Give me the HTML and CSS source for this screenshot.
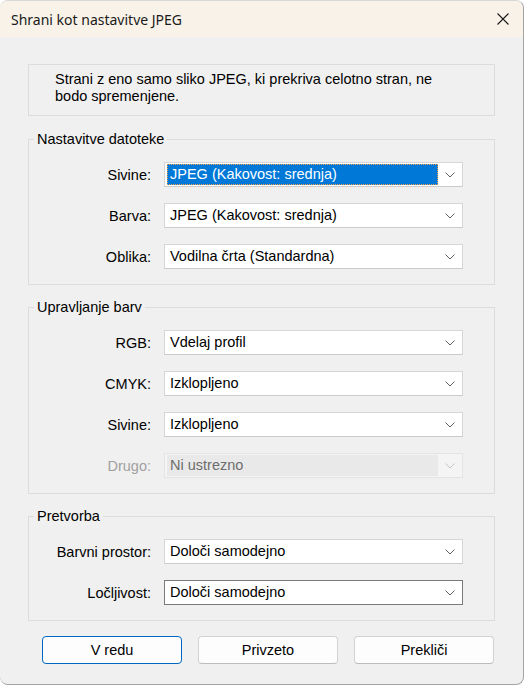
FILE: index.html
```html
<!DOCTYPE html>
<html lang="sl">
<head>
<meta charset="utf-8">
<title>Shrani kot nastavitve JPEG</title>
<link rel="stylesheet" href="styles.css">
</head>
<body>
<div class="window">
  <div class="titlebar">
    <span class="title">Shrani kot nastavitve JPEG</span>
    <span class="close">
      <svg width="12" height="12" viewBox="0 0 12 12"><path d="M0.5 0.5 L11.5 11.5 M11.5 0.5 L0.5 11.5" stroke="#1a1a1a" stroke-width="1.1" fill="none"/></svg>
    </span>
  </div>
  <div class="content">
    <div class="info">Strani z eno samo sliko JPEG, ki prekriva celotno stran, ne bodo spremenjene.</div>

    <fieldset class="group">
      <legend>Nastavitve datoteke</legend>
      <div class="rows">
        <label class="lbl">Sivine:</label>
        <div class="select"><span class="val selected">JPEG (Kakovost: srednja)</span><span class="arrow"><svg width="10" height="6" viewBox="0 0 10 6"><path d="M0.5 0.5 L5 5 L9.5 0.5" stroke="#606060" stroke-width="1" fill="none"/></svg></span></div>
        <label class="lbl">Barva:</label>
        <div class="select"><span class="val">JPEG (Kakovost: srednja)</span><span class="arrow"><svg width="10" height="6" viewBox="0 0 10 6"><path d="M0.5 0.5 L5 5 L9.5 0.5" stroke="#606060" stroke-width="1" fill="none"/></svg></span></div>
        <label class="lbl">Oblika:</label>
        <div class="select"><span class="val">Vodilna črta (Standardna)</span><span class="arrow"><svg width="10" height="6" viewBox="0 0 10 6"><path d="M0.5 0.5 L5 5 L9.5 0.5" stroke="#606060" stroke-width="1" fill="none"/></svg></span></div>
      </div>
    </fieldset>

    <fieldset class="group">
      <legend>Upravljanje barv</legend>
      <div class="rows">
        <label class="lbl">RGB:</label>
        <div class="select"><span class="val">Vdelaj profil</span><span class="arrow"><svg width="10" height="6" viewBox="0 0 10 6"><path d="M0.5 0.5 L5 5 L9.5 0.5" stroke="#606060" stroke-width="1" fill="none"/></svg></span></div>
        <label class="lbl">CMYK:</label>
        <div class="select"><span class="val">Izklopljeno</span><span class="arrow"><svg width="10" height="6" viewBox="0 0 10 6"><path d="M0.5 0.5 L5 5 L9.5 0.5" stroke="#606060" stroke-width="1" fill="none"/></svg></span></div>
        <label class="lbl">Sivine:</label>
        <div class="select"><span class="val">Izklopljeno</span><span class="arrow"><svg width="10" height="6" viewBox="0 0 10 6"><path d="M0.5 0.5 L5 5 L9.5 0.5" stroke="#606060" stroke-width="1" fill="none"/></svg></span></div>
        <label class="lbl disabled">Drugo:</label>
        <div class="select disabled"><span class="val">Ni ustrezno</span><span class="arrow"><svg width="10" height="6" viewBox="0 0 10 6"><path d="M0.5 0.5 L5 5 L9.5 0.5" stroke="#c4c4c4" stroke-width="1" fill="none"/></svg></span></div>
      </div>
    </fieldset>

    <fieldset class="group">
      <legend>Pretvorba</legend>
      <div class="rows">
        <label class="lbl">Barvni prostor:</label>
        <div class="select"><span class="val">Določi samodejno</span><span class="arrow"><svg width="10" height="6" viewBox="0 0 10 6"><path d="M0.5 0.5 L5 5 L9.5 0.5" stroke="#606060" stroke-width="1" fill="none"/></svg></span></div>
        <label class="lbl">Ločljivost:</label>
        <div class="select focused"><span class="val">Določi samodejno</span><span class="arrow"><svg width="10" height="6" viewBox="0 0 10 6"><path d="M0.5 0.5 L5 5 L9.5 0.5" stroke="#606060" stroke-width="1" fill="none"/></svg></span></div>
      </div>
    </fieldset>

    <div class="buttons">
      <button class="btn default">V redu</button>
      <button class="btn">Privzeto</button>
      <button class="btn">Prekliči</button>
    </div>
  </div>
</div>
</body>
</html>
```
FILE: styles.css
```css
html, body {
  margin: 0;
  padding: 0;
  background: #ffffff;
}
body {
  font-family: "Liberation Sans", Arial, sans-serif;
  font-size: 14.5px;
  color: #000;
}
.window {
  width: 523px;
  height: 683px;
  background: #f0f0f0;
  border: 1px solid #a3a3a3;
  border-left: none;
  border-top-color: #d8d8d8;
  border-radius: 8px;
  overflow: hidden;
}
.titlebar {
  height: 36px;
  background: #f9f2e8;
  display: flex;
  align-items: center;
  justify-content: space-between;
  padding: 0 14px 0 11px;
}
.title {
  font-family: "Noto Sans", "Liberation Sans", sans-serif;
  font-size: 14px;
  color: #1a1a1a;
}
.close {
  display: flex;
  width: 12px;
  height: 12px;
}
.content {
  padding: 27px 28px 0 28px;
}
.info {
  box-sizing: border-box;
  height: 52px;
  border: 1px solid #dcdcdc;
  padding: 6px 40px 0 26px;
  line-height: 17px;
}
.group {
  margin: 14px 0 0 0;
  padding: 14px 31px 15px 0;
  border: 1px solid #dcdcdc;
  min-width: 0;
}
.group + .group {
  margin-top: 13px;
}
.group legend {
  margin-left: 5px;
  padding: 0 3px;
  line-height: 18px;
}
.rows {
  display: grid;
  grid-template-columns: 122px 299px;
  column-gap: 13px;
  row-gap: 16px;
  align-items: center;
}
.lbl {
  text-align: right;
  white-space: nowrap;
}
.lbl.disabled {
  color: #a0a0a0;
}
.select {
  box-sizing: border-box;
  height: 25px;
  background: #fff;
  border: 1px solid #d6d6d6;
  border-bottom-color: #cbcbcb;
  display: flex;
  align-items: center;
  padding: 0 0 0 2px;
}
.select .val {
  flex: 1;
  box-sizing: border-box;
  height: 21px;
  line-height: 19px;
  padding-left: 2px;
  border: 1px solid transparent;
  white-space: nowrap;
}
.select .val.selected {
  background: #0078d7;
  color: #fff;
  border: 1px dotted #f5a04a;
}
.select .arrow {
  width: 24px;
  display: flex;
  justify-content: center;
  align-items: center;
}
.select.focused {
  border-color: #7a7a7a;
}
.select.disabled {
  background: #f4f4f4;
  border-color: #e4e4e4;
}
.select.disabled .val {
  background: #e9e9e9;
  color: #6d6d6d;
}
.buttons {
  display: grid;
  grid-template-columns: repeat(3, 140px);
  column-gap: 16px;
  justify-content: end;
  padding-right: 1px;
  margin-top: 15px;
}
.btn {
  box-sizing: border-box;
  height: 28px;
  font-family: "Liberation Sans", Arial, sans-serif;
  font-size: 14.5px;
  color: #000;
  background: #fdfdfd;
  border: 1px solid #d2d2d2;
  border-bottom-color: #bcbcbc;
  border-radius: 4px;
  padding: 0;
}
.btn.default {
  border-color: #0067c0;
}
```
